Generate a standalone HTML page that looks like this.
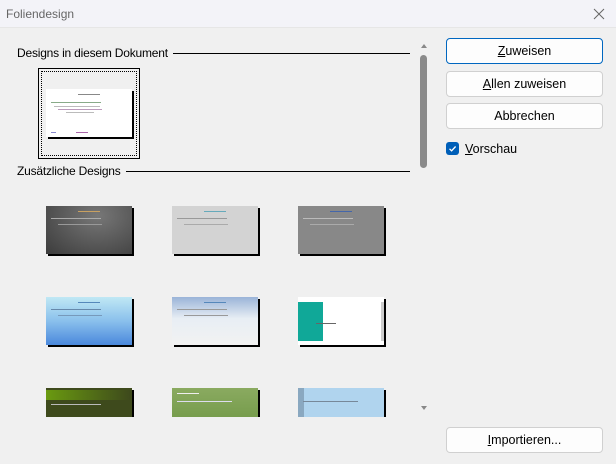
<!DOCTYPE html>
<html><head><meta charset="utf-8"><style>
*{margin:0;padding:0;box-sizing:border-box}
body{width:616px;height:464px;overflow:hidden;background:#f0f0f0;font-family:"Liberation Sans",sans-serif;font-size:12px;color:#000;position:relative}
.title{position:absolute;left:0;top:0;width:616px;height:28px;background:#f3f3f8;border-bottom:1px solid #e6e6e6}
.title span{position:absolute;left:6px;top:7px;font-size:12px;color:#666}
.x{position:absolute;left:593px;top:8px;width:12px;height:12px}
.abs{position:absolute}
.hdr{position:absolute;font-size:12px;letter-spacing:-0.2px;background:#f0f0f0;padding-right:5px}
.line{position:absolute;height:1px;background:#000}
.btn{position:absolute;left:446px;width:157px;height:26px;background:#fdfdfd;border:1px solid #d0d0d0;border-radius:4px;text-align:center;line-height:24px;font-size:12.5px}
.btn.def{border:1px solid #0067c0}
u{text-decoration:underline}
.t{position:absolute;width:86px;height:48px;box-shadow:2px 2px 0 #000}
.t i{position:absolute;display:block;height:1px}
</style></head><body>
<div class="title"><span>Foliendesign</span>
<svg class="x" viewBox="0 0 12 12"><path d="M1 1L11 11M11 1L1 11" stroke="#666" stroke-width="1"/></svg></div>

<div class="line" style="left:17px;top:53px;width:393px"></div>
<div class="hdr" style="left:17px;top:46px">Designs in diesem Dokument</div>
<div class="line" style="left:17px;top:171px;width:393px"></div>
<div class="hdr" style="left:17px;top:164px">Zusätzliche Designs</div>

<div class="abs" style="left:38px;top:68px;width:102px;height:91px;border:1px solid #000"></div>
<div class="abs" style="left:41px;top:71px;width:96px;height:85px;border:1px dotted #000"></div>
<div class="t" style="left:46px;top:89px;background:#fff">
<i style="left:32px;top:5px;width:22px;background:#888"></i>
<i style="left:5px;top:13px;width:50px;background:#8a8"></i>
<i style="left:8px;top:17px;width:46px;background:#bbb"></i>
<i style="left:12px;top:20px;width:44px;background:#b9b"></i>
<i style="left:20px;top:23px;width:28px;background:#bbb"></i>
<i style="left:5px;top:43px;width:5px;background:#88c"></i>
<i style="left:30px;top:43px;width:12px;background:#a6a"></i>
</div>

<div class="t" style="left:46px;top:206px;background:radial-gradient(ellipse at 60% 20%,#777,#3c3c3c)"><i style="left:32px;top:5px;width:22px;background:#c9a060"></i><i style="left:5px;top:12px;width:50px;background:#aaa"></i><i style="left:12px;top:18px;width:44px;background:#999"></i></div>
<div class="t" style="left:172px;top:206px;background:#d3d3d3"><i style="left:32px;top:5px;width:22px;background:#6ab"></i><i style="left:5px;top:12px;width:50px;background:#999"></i><i style="left:12px;top:18px;width:44px;background:#aaa"></i></div>
<div class="t" style="left:298px;top:206px;background:#888"><i style="left:32px;top:5px;width:22px;background:#46a"></i><i style="left:5px;top:12px;width:50px;background:#bbb"></i><i style="left:12px;top:18px;width:44px;background:#aaa"></i></div>
<div class="t" style="left:46px;top:297px;background:linear-gradient(#c0e8f4,#8ac0ec 50%,#4a88dc)"><i style="left:32px;top:5px;width:22px;background:#58b"></i><i style="left:5px;top:12px;width:50px;background:#68a"></i><i style="left:12px;top:18px;width:44px;background:#79b"></i></div>
<div class="t" style="left:172px;top:297px;background:linear-gradient(#9ab4d8,#e8eef4 45%,#f2f2f2)"><i style="left:32px;top:5px;width:22px;background:#58b"></i><i style="left:5px;top:12px;width:50px;background:#999"></i><i style="left:12px;top:18px;width:44px;background:#999"></i></div>
<div class="t" style="left:298px;top:297px;background:#fff"><div class="abs" style="left:0;top:5px;width:25px;height:39px;background:#10a898"></div><div class="abs" style="left:83px;top:5px;width:3px;height:39px;background:#ccc"></div><i style="left:18px;top:26px;width:20px;background:#666"></i></div>
<div style="position:absolute;left:0;top:380px;width:410px;height:37px;overflow:hidden">
<div class="t" style="left:46px;top:8px;background:#3e4a1c"><div class="abs" style="left:0;top:2px;width:84px;height:10px;background:linear-gradient(90deg,#6a9a10,#3e4a1c)"></div><i style="left:5px;top:16px;width:50px;background:#bbb"></i></div>
<div class="t" style="left:172px;top:8px;background:linear-gradient(#8aaa60,#6a9440)"><i style="left:5px;top:5px;width:22px;background:#eee"></i><i style="left:5px;top:13px;width:55px;background:#dde"></i></div>
<div class="t" style="left:298px;top:8px;background:#b0d4ee"><div class="abs" style="left:0;top:0;width:6px;height:48px;background:#8aa8c0"></div><i style="left:5px;top:13px;width:55px;background:#789"></i></div>
</div>

<svg class="abs" style="left:420px;top:43px" width="8" height="6" viewBox="0 0 8 6"><path d="M1 5L4 1L7 5Z" fill="#888"/></svg>
<div class="abs" style="left:420px;top:55px;width:7px;height:113px;background:#8a8a8a;border-radius:4px"></div>
<svg class="abs" style="left:420px;top:405px" width="8" height="6" viewBox="0 0 8 6"><path d="M1 1L4 5L7 1Z" fill="#888"/></svg>

<div class="btn def" style="top:38px"><u>Z</u>uweisen</div>
<div class="btn" style="top:71px"><u>A</u>llen zuweisen</div>
<div class="btn" style="top:103px">Abbrechen</div>
<div class="abs" style="left:446px;top:142px;width:13px;height:13px;background:#005fb8;border-radius:3px">
<svg width="13" height="13" viewBox="0 0 13 13" style="position:absolute;left:0;top:0"><path d="M3.5 6.8L5.6 8.8L9.6 4.5" stroke="#fff" stroke-width="1.3" fill="none"/></svg></div>
<div class="abs" style="left:465px;top:142px;font-size:12.5px"><u>V</u>orschau</div>
<div class="btn" style="top:427px"><u>I</u>mportieren...</div>
</body></html>
